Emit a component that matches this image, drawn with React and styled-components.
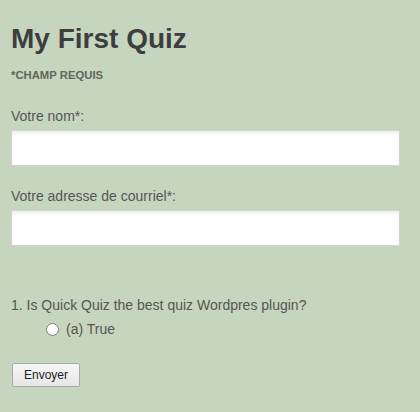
import React from "react";
import styled, { createGlobalStyle } from "styled-components";

const Global = createGlobalStyle`
    html, body {
        margin: 0;
        padding: 0;
        background: #c6d6be;
    }
    body {
        font-family: "Liberation Sans", Arial, sans-serif;
        color: #555;
    }
`;

const App = () => {
    return (
        <Page>
            <Global />
            <Title>My First Quiz</Title>
            <Required>*CHAMP REQUIS</Required>
            <Field>
                <Label>Votre nom*:</Label>
                <Input type="text" />
            </Field>
            <Field>
                <Label>Votre adresse de courriel*:</Label>
                <Input type="text" />
            </Field>
            <Question>
                <p>1. Is Quick Quiz the best quiz Wordpres plugin?</p>
                <Option>
                    <Radio type="radio" name="q1" />
                    (a) True
                </Option>
            </Question>
            <Submit type="button">Envoyer</Submit>
        </Page>
    )
};

const Page = styled.div`
    padding: 22px 20px 20px 11px;
    height: 412px;
    box-sizing: border-box;
`;

const Title = styled.h1`
    margin: 0;
    font-size: 28px;
    font-weight: bold;
    color: #3e3e3e;
    line-height: 34px;
`;

const Required = styled.div`
    margin-top: 12px;
    font-size: 11.3px;
    font-weight: bold;
    color: #5f665c;
    line-height: 14px;
`;

const Field = styled.div`
    margin-top: 22px;
    &:nth-of-type(2) {
        margin-top: 26px;
    }
`;

const Label = styled.label`
    display: block;
    font-size: 14px;
    line-height: 16px;
    color: #555;
    margin-bottom: 6px;
`;

const Input = styled.input`
    display: block;
    box-sizing: border-box;
    width: 100%;
    height: 36px;
    margin: 0;
    background: #fff;
    border: 1px solid #d4d4d4;
    box-shadow: inset 0 2px 3px rgba(0, 0, 0, 0.08);
    outline: none;
`;

const Question = styled.div`
    margin-top: 51px;
    font-size: 14px;
    color: #555;
    p {
        margin: 0;
        line-height: 16px;
    }
`;

const Option = styled.label`
    display: flex;
    align-items: center;
    gap: 7px;
    margin-top: 8px;
    padding-left: 35px;
    line-height: 16px;
`;

const Radio = styled.input`
    margin: 0;
    width: 13px;
    height: 13px;
`;

const Submit = styled.button`
    display: block;
    margin-top: 26px;
    margin-left: 1px;
    height: 24px;
    padding: 0 11px;
    font-family: "Liberation Sans", Arial, sans-serif;
    font-size: 12px;
    color: #222;
    background: linear-gradient(#f6f6f6, #e6e6e6);
    border: 1px solid #a9a9a9;
    border-radius: 2px;
`;

export default App;
